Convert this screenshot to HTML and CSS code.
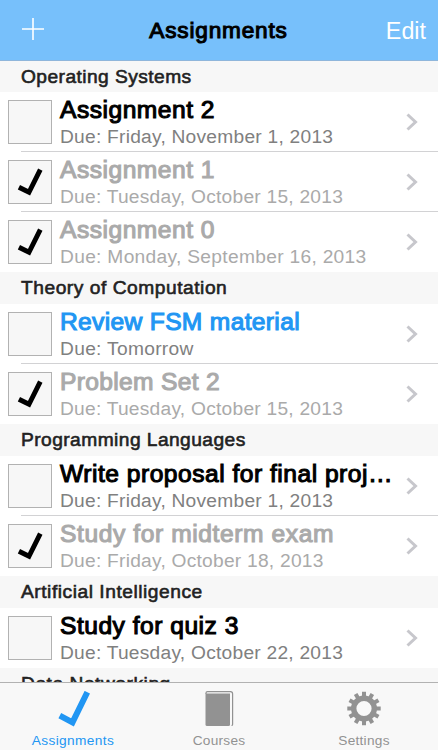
FILE: index.html
```html
<!DOCTYPE html>
<html lang="en">
<head>
<meta charset="utf-8">
<title>Assignments</title>
<link rel="stylesheet" href="styles.css">
</head>
<body>
<svg class="defs" width="0" height="0" aria-hidden="true">
  <symbol id="chevron" viewBox="0 0 12 18"><path d="M1.500 1.500 9.500 9 1.500 16.500" fill="none" stroke="#c7c7cc" stroke-width="3"/></symbol>
  <symbol id="check" viewBox="0 0 42 42"><path d="M31.300 8.700 20 31.300 9.900 26.200" fill="none" stroke="currentColor" stroke-width="4.900"/></symbol>
</svg>
<div class="app">
  <header class="nav">
    <svg class="plus" viewBox="0 0 22 22"><path d="M11 0V22M0 11H22" stroke="#fff" stroke-width="1.600"/></svg>
    <h1>Assignments</h1>
    <span class="edit">Edit</span>
  </header>
  <main class="list">
    <h2 class="first"><span>Operating Systems</span></h2>
    <div class="row"><i class="box"></i><div class="body"><b>Assignment 2</b><p>Due: Friday, November 1, 2013</p></div><svg class="chev"><use href="#chevron"/></svg></div>
    <div class="row done"><i class="box"><svg><use href="#check"/></svg></i><div class="body"><b>Assignment 1</b><p>Due: Tuesday, October 15, 2013</p></div><svg class="chev"><use href="#chevron"/></svg></div>
    <div class="row done last"><i class="box"><svg><use href="#check"/></svg></i><div class="body"><b>Assignment 0</b><p class="loose">Due: Monday, September 16, 2013</p></div><svg class="chev"><use href="#chevron"/></svg></div>
    <h2 class="loose"><span>Theory of Computation</span></h2>
    <div class="row soon"><i class="box"></i><div class="body"><b class="tight">Review FSM material</b><p class="loose">Due: Tomorrow</p></div><svg class="chev"><use href="#chevron"/></svg></div>
    <div class="row done last"><i class="box"><svg><use href="#check"/></svg></i><div class="body"><b class="tight">Problem Set 2</b><p>Due: Tuesday, October 15, 2013</p></div><svg class="chev"><use href="#chevron"/></svg></div>
    <h2><span>Programming Languages</span></h2>
    <div class="row"><i class="box"></i><div class="body"><b>Write proposal for final proj…</b><p>Due: Friday, November 1, 2013</p></div><svg class="chev"><use href="#chevron"/></svg></div>
    <div class="row done last"><i class="box"><svg><use href="#check"/></svg></i><div class="body"><b class="loose">Study for midterm exam</b><p>Due: Friday, October 18, 2013</p></div><svg class="chev"><use href="#chevron"/></svg></div>
    <h2 class="loose"><span>Artificial Intelligence</span></h2>
    <div class="row last"><i class="box"></i><div class="body"><b>Study for quiz 3</b><p>Due: Tuesday, October 22, 2013</p></div><svg class="chev"><use href="#chevron"/></svg></div>
    <h2 class="loose"><span>Data Networking</span></h2>
  </main>
  <footer class="tabs">
    <div class="tab active"><svg width="33" height="36" viewBox="0 0 33 36"><path d="M30.300 1.200 15.500 31.300 2.800 24.700" fill="none" stroke="currentColor" stroke-width="6"/></svg><span>Assignments</span></div>
    <div class="tab"><svg width="29" height="36" viewBox="0 0 29 36"><path d="M.5 2.500H25V33.500Q25 35 23.500 35H2Q.5 35 .5 33.500Z" fill="#929292"/><path d="M1 3V2Q1 .6 2.500 .6H25.500Q27.600 .6 27.600 2.700V33.500Q27.600 34.500 26.500 34.500" fill="none" stroke="#929292" stroke-width="1.200"/></svg><span>Courses</span></div>
    <div class="tab settings"><svg width="34" height="36" viewBox="-17 -17.500 34 36"><g stroke="#929292" stroke-width="4"><path d="M0-16.700V-10M0 16.700V10M-16.700 0H-10M16.700 0H10"/><path transform="rotate(30)" d="M0-16.700V-10M0 16.700V10M-16.700 0H-10M16.700 0H10"/><path transform="rotate(60)" d="M0-16.700V-10M0 16.700V10M-16.700 0H-10M16.700 0H10"/></g><circle r="10.300" fill="none" stroke="#929292" stroke-width="5.400"/></svg><span>Settings</span></div>
  </footer>
</div>
</body>
</html>
```
FILE: styles.css
```css
* { box-sizing: border-box; }
body { margin: 0; font-family: "Liberation Sans", Arial, sans-serif; background: #fff; }
h1, h2, p { margin: 0; font-weight: 400; }
.defs { display: block; height: 0; }
.app { width: 438px; height: 750px; display: flex; flex-direction: column; overflow: hidden; }
.nav { flex: none; height: 61px; background: #77c0fb; border-bottom: 1px solid #8fb6db; display: grid; grid-template-columns: 100px 1fr 100px; align-items: center; padding: 0 12px 0 22px; }
.plus { width: 22px; height: 22px; margin-top: -3px; }
.nav h1 { font-size: 22.600px; line-height: 28px; letter-spacing: .82px; text-align: center; color: #000; -webkit-text-stroke: 1.100px #000; margin-left: -11px; padding-top: 1px; white-space: nowrap; }
.edit { color: #fff; font-size: 23.300px; line-height: 28px; text-align: right; padding-top: 1px; }
.list { flex: 1; min-height: 0; overflow: hidden; }
.list h2 { height: 32px; background: #f7f7f7; padding-left: 21px; font-size: 19.200px; line-height: 32px; letter-spacing: .44px; color: #222; -webkit-text-stroke: .6px #222; }
.list h2.loose { letter-spacing: .53px; }
.list h2.first { height: 31px; line-height: 31px; }
.row { height: 60px; display: flex; align-items: center; padding: 0 20px 0 8px; background: linear-gradient(#d2d2d4, #d2d2d4) 21px 59px / 417px 1px no-repeat; }
.row.last { background: none; }
.box { flex: none; width: 44px; height: 44px; border: 1px solid #b2b2b2; background: #f7f7f7; color: #000; display: flex; }
.box svg { width: 42px; height: 42px; }
.body { flex: 1; min-width: 0; height: 60px; padding: 4px 0 0 8px; color: #000; white-space: nowrap; }
.body b { display: block; font-weight: 400; font-size: 24.600px; line-height: 28px; letter-spacing: .5px; -webkit-text-stroke: 1.100px currentColor; }
.body b.tight { letter-spacing: .33px; }
.body b.loose { letter-spacing: .59px; }
.body p { font-size: 19.200px; line-height: 24px; padding-top: 1px; letter-spacing: .24px; color: #808080; }
.body p.loose { letter-spacing: .3px; }
.chev { flex: none; width: 12px; height: 18px; }
.done .body, .done .body p { color: #aaa; }
.soon .body b { color: #2196f3; }
.tabs { flex: none; height: 68px; border-top: 1px solid #b2b2b2; background: #f8f8f8; display: grid; grid-template-columns: repeat(3, 1fr); color: #929292; }
.tab { display: flex; flex-direction: column; align-items: center; padding-top: 8px; font-size: 13.700px; line-height: 16px; letter-spacing: .25px; }
.tab svg { flex: none; }
.tab span { margin-top: 6px; }
.active { color: #2196f3; letter-spacing: .38px; }
.settings { padding-right: 2px; }
```
